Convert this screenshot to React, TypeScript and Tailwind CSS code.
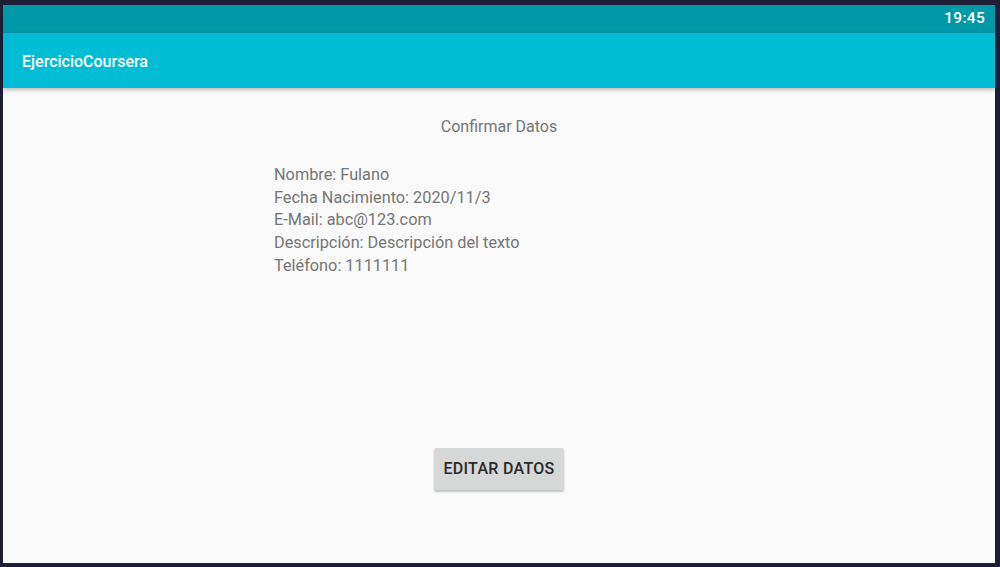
export default function App() {
  return (
    <div className="w-[1000px] h-[567px] bg-[#1e1e38] pt-[5px] pl-[3px] pr-[5px] pb-[4px]" style={{ fontFamily: 'Roboto, "Liberation Sans", sans-serif' }}>
      <div className="flex flex-col h-full bg-[#fafafa]">
        <div className="h-[28px] bg-[#0097a7] flex items-center justify-end pr-[10px]">
          <span className="text-white text-[15.5px] font-medium tracking-[0.3px]">19:45</span>
        </div>
        <div className="h-[55px] bg-[#00bcd4] flex items-center pl-[19px] pt-[2px] shadow-[0_2px_4px_rgba(0,0,0,0.25)] relative z-10">
          <span className="text-white text-[16px] font-medium">EjercicioCoursera</span>
        </div>
        <div className="flex-1 flex flex-col items-center">
          <p className="mt-[27px] text-[16px] text-[#757575] leading-[24px]">Confirmar Datos</p>
          <div className="w-full pl-[271px] mt-[25px] text-[16.3px] text-[#757575] leading-[22.7px]">
            <p>Nombre: Fulano</p>
            <p>Fecha Nacimiento: 2020/11/3</p>
            <p>E-Mail: abc@123.com</p>
            <p>Descripción: Descripción del texto</p>
            <p>Teléfono: 1111111</p>
          </div>
          <button className="mt-[170px] w-[130px] h-[42px] bg-[#d6d7d7] rounded-[2px] text-[16px] font-medium tracking-[0.3px] text-[#2a2a2a] shadow-[0_2px_2px_rgba(0,0,0,0.22)]">
            EDITAR DATOS
          </button>
        </div>
      </div>
    </div>
  )
}
